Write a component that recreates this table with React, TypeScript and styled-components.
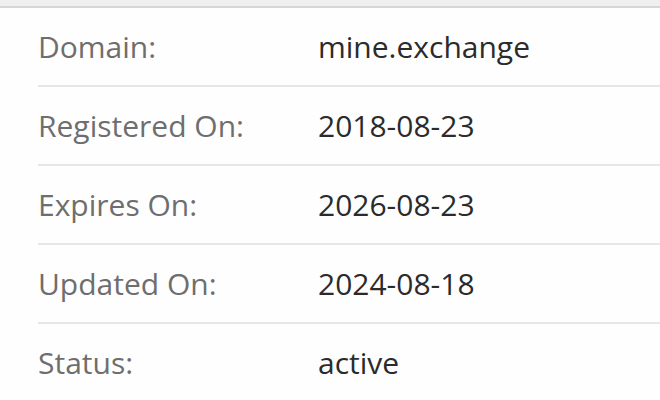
import React from "react";
import styled, { createGlobalStyle } from "styled-components";

const Global = createGlobalStyle`
  html, body { margin: 0; padding: 0; background: #fefefe; }
  body { font-family: "Open Sans", "Liberation Sans", sans-serif; }
`;

const Page = styled.div`
  width: 660px;
  height: 400px;
  overflow: hidden;
  background: #fefefe;
`;

const TopBar = styled.div`
  height: 6px;
  background: #efefef;
  border-bottom: 2px solid #d6d6d6;
`;

const List = styled.div`
  padding-left: 38px;
`;

const Row = styled.div<{ $last?: boolean }>`
  display: grid;
  grid-template-columns: 280px 1fr;
  align-items: center;
  height: 77px;
  border-bottom: ${(p) => (p.$last ? "none" : "2px solid #e7e7e7")};
`;

const Label = styled.div`
  font-size: 30px;
  color: #6e6e6e;
  line-height: 1;
`;

const Value = styled.div`
  font-size: 30px;
  color: #2b2b2b;
  line-height: 1;
`;

const rows: [string, string][] = [
  ["Domain:", "mine.exchange"],
  ["Registered On:", "2018-08-23"],
  ["Expires On:", "2026-08-23"],
  ["Updated On:", "2024-08-18"],
  ["Status:", "active"],
];

export default function App() {
  return (
    <>
      <Global />
      <Page>
        <TopBar />
        <List>
          {rows.map(([l, v], i) => (
            <Row key={l} $last={i === rows.length - 1}>
              <Label>{l}</Label>
              <Value>{v}</Value>
            </Row>
          ))}
        </List>
      </Page>
    </>
  );
}
